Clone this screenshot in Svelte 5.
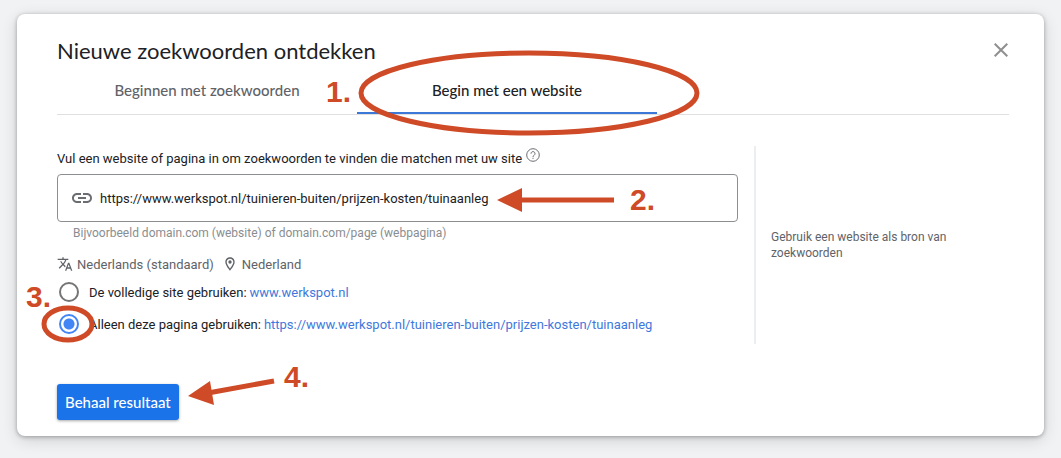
<script>
    const steps = ['Beginnen met zoekwoorden', 'Begin met een website'];
    const page = 'https://www.werkspot.nl/tuinieren-buiten/prijzen-kosten/tuinaanleg';

    let activeTab = 1;
    let url = page;
    let scope = 'page';
</script>


<div class="dialog" role="dialog" aria-labelledby="title">

    <header>
        <h1 id="title">Nieuwe zoekwoorden ontdekken</h1>
        <button class="close" type="button" aria-label="Sluiten">
            <svg width="14" height="14" viewBox="0 0 14 14">
                <path d="M.7.7l12.6 12.6M13.3.7L.7 13.3" />
            </svg>
        </button>
    </header>

    <div class="tabs" role="tablist">
        {#each steps as step, i}
            <button
                class="tab"
                class:active={activeTab === i}
                type="button"
                role="tab"
                aria-selected={activeTab === i}
                on:click={() => activeTab = i}
            >
                {step}
                {#if i === 1}
                    <svg class="mark">
                        <ellipse cx="172" cy="25" rx="168" ry="40" />
                        <text x="-31" y="34">1.</text>
                    </svg>
                {/if}
            </button>
        {/each}
    </div>

    <form on:submit|preventDefault>
        <div class="columns">
            <div class="main">
                <div class="label">
                    <label for="site">Vul een website of pagina in om zoekwoorden te vinden die matchen met uw site</label>
                    <svg class="help" width="14" height="14" viewBox="0 0 14 14">
                        <circle cx="7" cy="7" r="6.3" />
                        <path d="M5 5.7a2 2 0 1 1 3.2 1.5C7.4 7.8 7 8 7 8.9M7 9.8v1.1" />
                    </svg>
                </div>

                <div class="field">
                    <svg width="24" height="24" viewBox="0 0 24 24">
                        <path d="M3.9 12c0-1.71 1.39-3.1 3.1-3.1h4V7H7c-2.76 0-5 2.24-5 5s2.24 5 5 5h4v-1.9H7c-1.71 0-3.1-1.39-3.1-3.1zM8 13h8v-2H8v2zm9-6h-4v1.9h4c1.71 0 3.1 1.39 3.1 3.1s-1.39 3.1-3.1 3.1h-4V17h4c2.76 0 5-2.24 5-5s-2.24-5-5-5z" />
                    </svg>
                    <input id="site" type="text" bind:value={url} />
                    <svg class="mark">
                        <path class="shaft" d="M460 25H556" />
                        <path class="head" d="M439 25l25-12v24z" />
                        <text x="572" y="35">2.</text>
                    </svg>
                </div>
                <p class="hint">Bijvoorbeeld domain.com (website) of domain.com/page (webpagina)</p>

                <div class="locale">
                    <svg width="16" height="16" viewBox="0 0 24 24">
                        <path d="M12.87 15.07l-2.54-2.51.03-.03c1.74-1.94 2.98-4.17 3.71-6.53H17V4h-7V2H8v2H1v1.99h11.17C11.5 7.92 10.44 9.75 9 11.35 8.07 10.32 7.3 9.19 6.69 8h-2c.73 1.63 1.73 3.17 2.98 4.56l-5.09 5.02L4 19l5-5 3.11 3.11.76-2.04zM18.5 10h-2L12 22h2l1.12-3h4.75L21 22h2l-4.5-12zm-2.62 7l1.62-4.33L19.12 17h-3.24z" />
                    </svg>
                    <span>Nederlands (standaard)</span>
                    <svg class="pin" width="16" height="16" viewBox="0 0 24 24">
                        <path d="M12 2C8.13 2 5 5.13 5 9c0 5.25 7 13 7 13s7-7.75 7-13c0-3.87-3.13-7-7-7zM7 9c0-2.76 2.24-5 5-5s5 2.24 5 5c0 2.88-2.88 7.19-5 9.88C9.92 16.21 7 11.85 7 9z" />
                        <circle cx="12" cy="9" r="2.5" />
                    </svg>
                    <span>Nederland</span>
                </div>

                <div class="option">
                    <input id="scope-site" type="radio" value="site" bind:group={scope} />
                    <label for="scope-site">De volledige site gebruiken:</label>
                    <a href="#site">www.werkspot.nl</a>
                </div>
                <div class="option">
                    <input id="scope-page" type="radio" value="page" bind:group={scope} />
                    <label for="scope-page">Alleen deze pagina gebruiken:</label>
                    <a href="#page">{page}</a>
                    <svg class="mark">
                        <ellipse cx="11" cy="16" rx="24" ry="16" />
                        <text x="-31" y="-1">3.</text>
                    </svg>
                </div>
            </div>

            <aside>
                <p>Gebruik een website als bron van zoekwoorden</p>
            </aside>
        </div>

        <button class="submit" type="submit">
            Behaal resultaat
            <svg class="mark">
                <path class="shaft" d="M151 9L217 -3" />
                <path class="head" d="M131 12l22-15 4 24z" />
                <text x="227" y="3">4.</text>
            </svg>
        </button>
    </form>

</div>


<style>
    :global(body) {
        margin: 0;
        background-color: #f0f2f4;
    }

    .dialog {
        margin: 14px 17px 22px;
        padding: 22px 35px 16px 40px;
        background-color: #fff;
        border-radius: 8px;
        box-shadow: 0 1px 4px rgba(0, 0, 0, .3), 0 4px 16px rgba(0, 0, 0, .14);
        font-family: Roboto, "Liberation Sans", sans-serif;
        font-size: 13px;
        color: #202124;
    }

    h1, p {
        margin: 0;
    }

    button {
        padding: 0;
        border: none;
        background: none;
        font-family: Lato, Roboto, sans-serif;
        cursor: pointer;
    }

    header {
        display: flex;
        justify-content: space-between;
        height: 32px;
    }

    h1 {
        font-family: Lato, Roboto, sans-serif;
        font-size: 22px;
        font-weight: 400;
        line-height: 30px;
    }

    .close {
        display: flex;
        align-items: center;
        height: 28px;
        padding-right: 1px;
    }

    .close path {
        fill: none;
        stroke: #8f8f8f;
        stroke-width: 2;
    }

    .tabs {
        display: flex;
        border-bottom: 1px solid #e0e0e0;
    }

    .tab {
        position: relative;
        width: 300px;
        height: 46px;
        border-bottom: 2px solid transparent;
        font-size: 15px;
        font-weight: 500;
        color: #5f6368;
    }

    .tab.active {
        border-color: #3b78d8;
        color: #202124;
    }

    .columns {
        display: grid;
        grid-template-columns: minmax(0, 1fr) 255px;
        column-gap: 16px;
        margin-top: 31px;
    }

    .label {
        display: flex;
        gap: 4px;
        line-height: 26px;
    }

    .help {
        margin-top: 2px;
        fill: none;
        stroke: #6a6d71;
    }

    .field {
        position: relative;
        display: flex;
        align-items: center;
        gap: 6px;
        height: 46px;
        margin-top: 2px;
        padding: 0 12px;
        border: 1px solid #8c8f92;
        border-radius: 4px;
        fill: #6a6d71;
    }

    .field input {
        flex: 1;
        min-width: 0;
        padding: 0;
        border: none;
        outline: none;
        font: inherit;
        color: inherit;
    }

    .hint {
        margin-top: 3px;
        padding-left: 16px;
        font-size: 12px;
        line-height: 16px;
        color: #8a8d90;
    }

    .locale {
        display: flex;
        align-items: center;
        gap: 4px;
        height: 20px;
        margin: 13px 0 2px;
        color: #5f6368;
        fill: #5f6368;
    }

    .pin {
        margin-left: 4px;
    }

    .option {
        position: relative;
        display: flex;
        align-items: center;
        gap: 3px;
        height: 32px;
        padding-left: 2px;
    }

    .option input {
        appearance: none;
        width: 20px;
        height: 20px;
        margin: 0 7px 0 0;
        border: 2px solid #757575;
        border-radius: 50%;
    }

    .option input:checked {
        border-color: #4285f4;
        background: radial-gradient(circle, #4285f4 5px, #fff 6px);
    }

    a {
        color: #3f78dc;
        text-decoration: none;
    }

    aside {
        display: flex;
        align-items: center;
        margin-bottom: -4px;
        padding-left: 15px;
        border-left: 2px solid #eceeef;
        font-size: 12px;
        line-height: 16px;
        color: #5f6368;
    }

    .submit {
        position: relative;
        height: 36px;
        margin-top: 44px;
        padding: 0 8px;
        border-radius: 3px;
        background-color: #1a73e8;
        box-shadow: 0 1px 3px rgba(0, 0, 0, .35);
        font-size: 15px;
        font-weight: 500;
        color: #fff;
    }

    /* numbered walkthrough marks, drawn from the top left of their control */
    .mark {
        position: absolute;
        top: 0;
        left: 0;
        z-index: 1;
        width: 100%;
        height: 100%;
        overflow: visible;
        pointer-events: none;
        fill: none;
    }

    .mark ellipse, .mark .shaft {
        stroke: #cf4a26;
        stroke-width: 5;
    }

    .mark .head, .mark text {
        fill: #cf4a26;
    }

    .mark text {
        font-family: "Liberation Sans", Arial, sans-serif;
        font-size: 30px;
        font-weight: 700;
    }
</style>
